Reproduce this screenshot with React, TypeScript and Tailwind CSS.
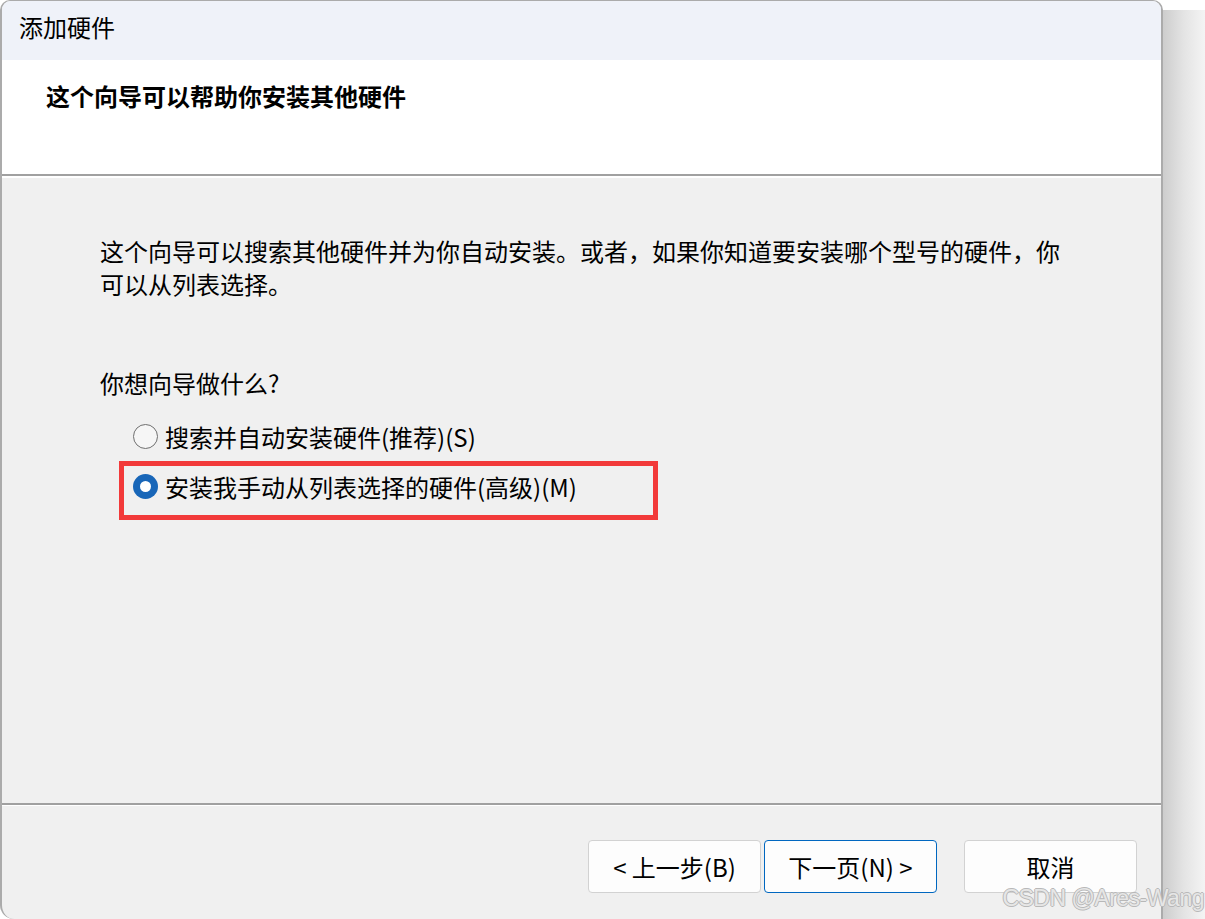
import React from "react";

const font = { fontFamily: '"Noto Sans CJK SC", "Noto Sans", sans-serif' };

function Radio({ checked }: { checked?: boolean }) {
  if (checked) {
    return (
      <span className="flex h-[25px] w-[25px] shrink-0 items-center justify-center rounded-full bg-[#1866b8]">
        <span className="h-[11px] w-[11px] rounded-full bg-white" />
      </span>
    );
  }
  return (
    <span className="h-[25px] w-[25px] shrink-0 rounded-full border-[1.5px] border-[#6f6f6f] bg-[#f6f6f6]" />
  );
}

function Button({
  label,
  primary,
}: {
  label: string;
  primary?: boolean;
}) {
  return (
    <button
      className={
        primary
          ? "flex h-[53px] w-[173px] items-center justify-center rounded-[4px] border border-[#0067c0] bg-[#fdfdfd] text-[24px] leading-none text-black"
          : "flex h-[53px] w-[173px] items-center justify-center rounded-[4px] border border-[#d2d2d2] bg-[#fdfdfd] text-[24px] leading-none text-black"
      }
    >
      {label}
    </button>
  );
}

export default function App() {
  return (
    <div
      className="relative flex h-[919px] w-[1205px] overflow-hidden bg-white text-black"
      style={font}
    >
      {/* dialog window */}
      <div className="flex h-[919px] w-[1163px] shrink-0 flex-col overflow-hidden rounded-t-[10px] rounded-bl-[14px] border-x-2 border-t border-[#ababab] bg-[#f0f0f0]">
        {/* title bar */}
        <div className="flex h-[59px] shrink-0 items-center bg-[#eff2f9] pl-[17px] pb-[7px] text-[24px]">
          添加硬件
        </div>

        {/* header */}
        <div className="h-[116px] shrink-0 border-b-2 border-[#a0a0a0] bg-white pl-[44px] pt-[19px] text-[24px] font-bold leading-[33px]">
          这个向导可以帮助你安装其他硬件
        </div>
        <div className="h-[2px] shrink-0 bg-white" />

        {/* body */}
        <div className="flex h-[625px] shrink-0 flex-col pl-[98px] pt-[56px] text-[24px] leading-[33px]">
          <p className="w-[980px]">
            这个向导可以搜索其他硬件并为你自动安装。或者，如果你知道要安装哪个型号的硬件，你可以从列表选择。
          </p>

          <p className="mt-[66px]">你想向导做什么?</p>

          <div className="mt-[17px] flex h-[40px] items-center gap-[7px] pl-[33px]">
            <Radio />
            <span>搜索并自动安装硬件(推荐)(S)</span>
          </div>

          <div className="ml-[19px] mt-[5px] flex h-[59px] w-[539px] items-start gap-[7px] border-[5px] border-[#f23a3a] pl-[9px] pt-[4px]">
            <span className="mt-[4px]">
              <Radio checked />
            </span>
            <span>安装我手动从列表选择的硬件(高级)(M)</span>
          </div>
        </div>

        {/* footer separator */}
        <div className="h-[2px] shrink-0 bg-[#a0a0a0]" />
        <div className="h-[1px] shrink-0 bg-white" />

        {/* buttons */}
        <div className="flex flex-1 items-start justify-end pr-[24px] pt-[34px]">
          <Button label="< 上一步(B)" />
          <span className="w-[3px]" />
          <Button label="下一页(N) >" primary />
          <span className="w-[27px]" />
          <Button label="取消" />
        </div>
      </div>

      {/* window shadow */}
      <div className="mt-[10px] flex-1 bg-gradient-to-r from-[#cdcdcd] via-[#e4e4e4] to-[#f4f4f4]" />

      {/* watermark */}
      <span
        className="absolute bottom-[9px] right-[1px] text-[23px] leading-none tracking-[-0.5px] text-[#e6e6e6]"
        style={{
          fontFamily: '"Liberation Sans", Arial, sans-serif',
          textShadow:
            "1px 0 #b8b8b8, -1px 0 #b8b8b8, 0 1px #b8b8b8, 0 -1px #b8b8b8",
        }}
      >
        CSDN @Ares-Wang
      </span>
    </div>
  );
}
